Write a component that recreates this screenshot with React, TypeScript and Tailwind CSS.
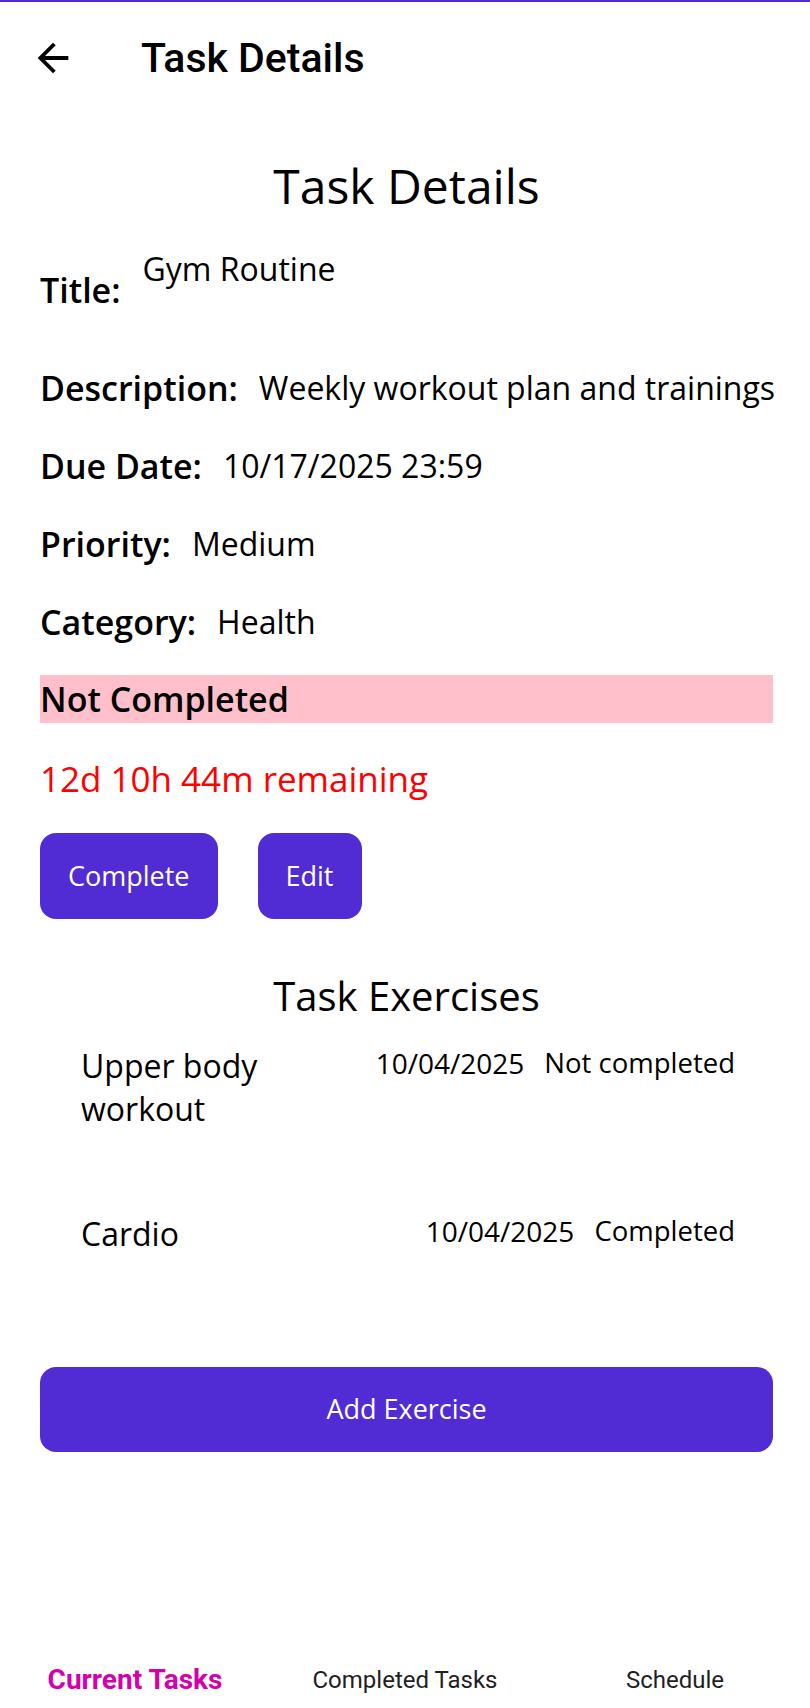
import React from "react";

const labelCls = "text-[34px] leading-[46px] font-semibold text-black whitespace-nowrap";
const valueCls = "text-[32px] leading-[44px] text-black whitespace-nowrap";

const Field: React.FC<{ label: string; value: string }> = ({ label, value }) => (
  <div className="h-[46px] flex items-center gap-[21px]">
    <span className={labelCls}>{label}</span>
    <span className={valueCls}>{value}</span>
  </div>
);

const exercises = [
  { name: "Upper body workout", date: "10/04/2025", status: "Not completed" },
  { name: "Cardio", date: "10/04/2025", status: "Completed" },
];

const App: React.FC = () => {
  return (
    <div className="min-h-[1708px] w-full bg-white flex flex-col">
      {/* top edge */}
      <div className="h-[2px] w-full bg-[#512bd4]" />

      {/* toolbar */}
      <div
        className="h-[112px] flex items-center pl-[30px]"
        style={{ fontFamily: "Roboto, sans-serif" }}
      >
        <svg viewBox="0 0 24 24" className="w-[46px] h-[46px]" fill="#000">
          <path d="M20 11H7.83l5.59-5.59L12 4l-8 8 8 8 1.41-1.41L7.83 13H20v-2z" />
        </svg>
        <span className="ml-[65px] text-[41px] leading-none font-medium text-black">Task Details</span>
      </div>

      {/* content */}
      <div
        className="flex flex-col pl-[40px] pr-[37px]"
        style={{ fontFamily: '"Open Sans", "Noto Sans", sans-serif' }}
      >
        <h1 className="mt-[40px] text-center text-[48px] leading-[64px] font-medium text-black">Task Details</h1>

        {/* Title row: value sits higher than the label */}
        <div className="mt-[29px] flex items-start gap-[22px]">
          <span className={`${labelCls} mt-[20px]`}>Title:</span>
          <span className={valueCls}>Gym Routine</span>
        </div>

        <div className="mt-[52px] flex flex-col gap-[32px]">
          <Field label="Description:" value="Weekly workout plan and trainings" />
          <Field label="Due Date:" value="10/17/2025 23:59" />
          <Field label="Priority:" value="Medium" />
          <Field label="Category:" value="Health" />
        </div>

        <div className="mt-[30px] h-[48px] bg-[#ffc0cb] text-[34px] leading-[48px] font-semibold text-black">
          Not Completed
        </div>

        <div className="mt-[32px] text-[35px] leading-[48px] text-[#ff0000]">12d 10h 44m remaining</div>

        <div className="mt-[30px] flex gap-[40px]">
          <button className="h-[86px] px-[28px] rounded-[16px] bg-[#512bd4] text-white text-[27px]">Complete</button>
          <button className="h-[86px] px-[28px] rounded-[16px] bg-[#512bd4] text-white text-[27px]">Edit</button>
        </div>

        <h2 className="mt-[50px] text-center text-[40px] leading-[54px] font-medium text-black">Task Exercises</h2>

        <div className="mt-[21px] pl-[41px] pr-[38px] flex flex-col gap-[82px]">
          {exercises.map((ex) => (
            <div key={ex.name} className="flex items-start">
              <span className="flex-1 min-w-0 text-[32px] leading-[43px] text-black">{ex.name}</span>
              <span className="ml-[22px] shrink-0 text-[28px] leading-[38px] text-black">{ex.date}</span>
              <span className="ml-[20px] shrink-0 text-[27.5px] leading-[38px] text-black">{ex.status}</span>
            </div>
          ))}
        </div>

        <button className="mt-[112px] h-[85px] w-full rounded-[16px] bg-[#512bd4] text-white text-[27px]">
          Add Exercise
        </button>
      </div>

      {/* bottom tabs */}
      <div
        className="mt-auto grid grid-cols-3 items-center pb-[12px]"
        style={{ fontFamily: "Roboto, sans-serif" }}
      >
        <span className="text-center text-[28px] leading-[32px] font-bold text-[#d500a8]">Current Tasks</span>
        <span className="text-center text-[24px] leading-[32px] text-[#1f1f1f]">Completed Tasks</span>
        <span className="text-center text-[24px] leading-[32px] text-[#1f1f1f]">Schedule</span>
      </div>
    </div>
  );
};

export default App;
